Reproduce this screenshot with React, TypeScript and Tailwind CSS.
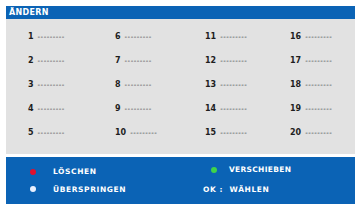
import React from "react";

const cols = [
  { w: "w-[87px]", items: [1, 2, 3, 4, 5] },
  { w: "w-[90px]", items: [6, 7, 8, 9, 10] },
  { w: "w-[85px]", items: [11, 12, 13, 14, 15] },
  { w: "w-[60px]", items: [16, 17, 18, 19, 20] },
];

function Slot({ n }: { n: number }) {
  return (
    <div className="h-[24px] flex items-center text-[#1e1e1e]">
      <span className="text-[8px] font-bold leading-none">{n}</span>
      <span className="ml-[4px] text-[7px] leading-none tracking-[0.5px] text-[#222]">---------</span>
    </div>
  );
}

function Dot({ color }: { color: string }) {
  return <span className={`w-[6px] h-[6px] rounded-full shrink-0 ${color}`} />;
}

export default function App() {
  return (
    <div
      className="w-[359px] h-[204px] bg-white pt-[6px] pl-[6px] pr-[4px] flex flex-col"
      style={{ fontFamily: "'DejaVu Sans', 'Noto Sans', sans-serif" }}
    >
      <div className="h-[13px] bg-[#0b63b5] flex items-center pl-[3px]">
        <span className="text-white text-[8px] font-bold leading-none tracking-[0.3px]">ÄNDERN</span>
      </div>

      <div className="h-[135px] bg-[#e2e2e2] pt-[6px] pl-[22px] flex">
        {cols.map((col, i) => (
          <div key={i} className={`${col.w} shrink-0 flex flex-col`}>
            {col.items.map((n) => (
              <Slot key={n} n={n} />
            ))}
          </div>
        ))}
      </div>

      <div className="mt-[3px] flex-1 bg-[#0b63b5] flex text-white text-[7.5px] font-bold leading-none tracking-[0.6px] pt-[11px]">
        <div className="w-[197px] shrink-0 pl-[24px] flex flex-col gap-[10px]">
          <div className="flex items-center gap-[17px]">
            <Dot color="bg-[#e0102e]" />
            <span>LÖSCHEN</span>
          </div>
          <div className="flex items-center gap-[17px]">
            <Dot color="bg-[#e8f0ff]" />
            <span>ÜBERSPRINGEN</span>
          </div>
        </div>
        <div className="flex flex-col gap-[10px] -mt-[2px]">
          <div className="flex items-center gap-[12px] pl-[8px]">
            <Dot color="bg-[#3fd34a]" />
            <span className="tracking-[0.3px]">VERSCHIEBEN</span>
          </div>
          <div className="flex items-center mt-[2px]">
            <span>OK :&nbsp;&nbsp;WÄHLEN</span>
          </div>
        </div>
      </div>
    </div>
  );
}
